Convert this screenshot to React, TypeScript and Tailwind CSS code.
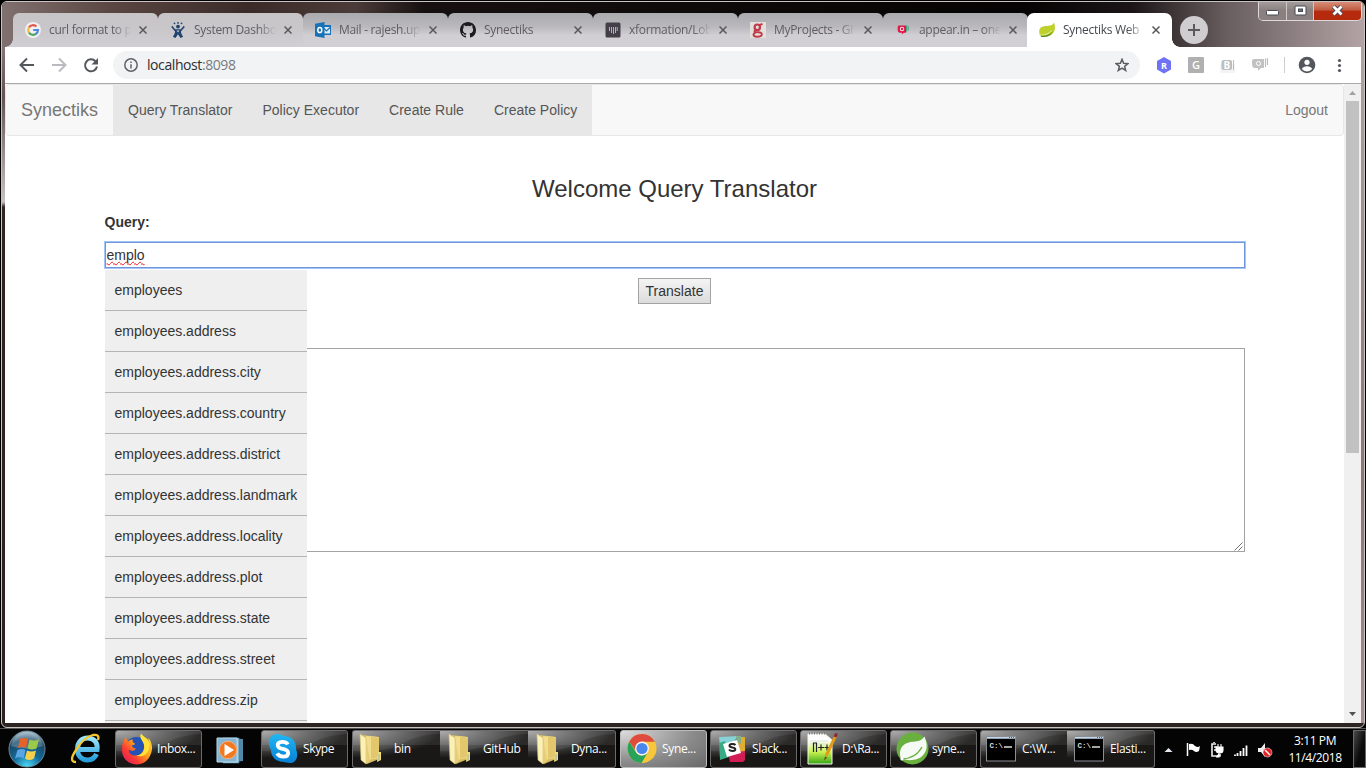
import React from "react";

type P = { className?: string };

const tabs = [
  { title: "curl format to p", icon: "google" },
  { title: "System Dashbo", icon: "jira" },
  { title: "Mail - rajesh.up", icon: "outlook" },
  { title: "Synectiks", icon: "github" },
  { title: "xformation/Lob", icon: "zube" },
  { title: "MyProjects - Gi", icon: "gerrit" },
  { title: "appear.in – one", icon: "appear" },
];

const suggestions = [
  "employees",
  "employees.address",
  "employees.address.city",
  "employees.address.country",
  "employees.address.district",
  "employees.address.landmark",
  "employees.address.locality",
  "employees.address.plot",
  "employees.address.state",
  "employees.address.street",
  "employees.address.zip",
];

function TabIcon({ name }: { name: string }) {
  return (
    <svg width="16" height="16" viewBox="0 0 16 16" className="shrink-0">
      {name === "google" && (
        <g fill="none" strokeWidth="2.2">
          <circle cx="8" cy="8" r="8" fill="#f1eff0" />
          <path d="M4 5.4A4.9 4.9 0 0 1 11.4 4.5" stroke="#e0544b" />
          <path d="M4 5.3A4.9 4.9 0 0 0 4 10.7" stroke="#f2bf42" />
          <path d="M4 10.6A4.9 4.9 0 0 0 11.2 11.7" stroke="#4aa563" />
          <path d="M8.2 8H13A4.9 4.9 0 0 1 11 11.8" stroke="#5187e0" />
        </g>
      )}
      {name === "jira" && (
        <g fill="#1f4470">
          <circle cx="8" cy="4.6" r="1.9" />
          <circle cx="4.5" cy="1.3" r=".9" />
          <circle cx="8" cy=".9" r=".9" />
          <circle cx="11.5" cy="1.3" r=".9" />
          <path d="M2.2 3.8l3 3.4h5.6l3-3.4 1 1.3-3.9 4.3c.3 2 1 3.8 2.3 5.3L10.5 16 8 12.2 5.5 16l-2.7-1.3C4.1 13.2 4.8 11.4 5.1 9.4L1.2 5.1z" />
          <path d="M6.5 8.5h3L8 10.5z" fill="#cfcdd0" />
        </g>
      )}
      {name === "outlook" && (
        <g>
          <path d="M8 3h8v10H8z" fill="#1772b8" />
          <path d="M9 5h6v6.5H9z" fill="#dfe9f2" />
          <path d="M9 6.5l2.500 2.500L15 5.500" fill="none" stroke="#1772b8" strokeWidth="1.2" />
          <path d="M0 1.800L9.500 0v16L0 14.200z" fill="#1772b8" />
          <ellipse cx="4.8" cy="8" rx="2" ry="2.6" fill="none" stroke="#fff" strokeWidth="1.5" />
        </g>
      )}
      {name === "github" && (
        <path fill="#1d1b1d" d="M8 0C3.580 0 0 3.580 0 8c0 3.540 2.290 6.530 5.470 7.590.4.070.550-.170.550-.380 0-.190-.010-.820-.010-1.490-2.010.370-2.530-.490-2.690-.940-.090-.230-.480-.940-.820-1.130-.280-.150-.680-.520-.010-.530.630-.010 1.080.580 1.230.820.720 1.210 1.870.870 2.330.660.070-.520.280-.870.510-1.070-1.780-.2-3.640-.890-3.640-3.950 0-.870.310-1.590.820-2.150-.080-.2-.360-1.020.080-2.120 0 0 .670-.210 2.200.820a7.400 7.400 0 0 1 4 0c1.530-1.040 2.200-.820 2.200-.820.440 1.100.160 1.920.080 2.120.510.560.820 1.270.820 2.150 0 3.070-1.870 3.750-3.650 3.950.290.250.540.730.540 1.480 0 1.070-.010 1.930-.010 2.200 0 .210.150.460.550.380A8 8 0 0 0 16 8c0-4.420-3.580-8-8-8z" />
      )}
      {name === "zube" && (
        <g>
          <rect x=".5" y=".5" width="15" height="15" rx="1.5" fill="#443e48" />
          <path d="M4.500 5v4M6.500 5v6M8.500 5v7M10.500 5v6M12.200 5v4" stroke="#d2ced5" strokeWidth=".8" />
        </g>
      )}
      {name === "gerrit" && (
        <g>
          <path d="M0 0h16v16H0z" fill="#e3dfdd" />
          <g fill="none" stroke="#bf3c4b" strokeWidth="2.2">
            <ellipse cx="7.3" cy="5.3" rx="2.7" ry="2.8" />
            <path d="M9 3.200l3.500-1.200M5.500 8C3 10 5.500 10 8 10.200s4.300.5 3.800 2.600c-.8 2.600-8.300 2.600-8.300 0 0-1.200 1-1.900 2.500-2.300" strokeWidth="1.9" />
          </g>
        </g>
      )}
      {name === "appear" && (
        <g>
          <path d="M11 3.500h1.300v6H11zM12.800 4h.9v4.500h-.9z" fill="#43a882" />
          <path d="M3.500 3.500h7.500v7.200H8.700L7 12.500v-1.800H4.500Q2.700 10 2.700 8V5z" fill="#de1746" />
          <circle cx="7" cy="7" r="1.7" fill="none" stroke="#f4dae0" strokeWidth="1.1" />
        </g>
      )}
      {name === "spring" && (
        <g>
          <path d="M.3 10.500C-.5 4.500 4.500 4.200 9 3.800c3-.3 5-.8 6-3.300 1.500 4 1.300 8-1 10.800-3 3.900-9 3.700-13.200 2.200z" fill="#bdd02b" />
          <path d="M1.500 13.500c5 .5 9-.6 12.200-4.600-1.700 4.900-6 6.400-11.500 6.100z" fill="#5b8a22" />
          <path d="M1 13c5 .3 9-1.300 12-4.600" fill="none" stroke="#eef4c4" strokeWidth=".8" />
        </g>
      )}
    </svg>
  );
}

function Close({ className = "" }: P) {
  return (
    <svg width="8" height="8" viewBox="0 0 8 8" className={"shrink-0 " + className}>
      <path d="M.5.5l7 7M7.500.5l-7 7" stroke="#5a585b" strokeWidth="1.5" />
    </svg>
  );
}

function TabTitle({ children, active }: { children: React.ReactNode; active?: boolean }) {
  return (
    <span
      className={
        "ml-2 w-[84px] shrink-0 whitespace-nowrap font-['Open_Sans',sans-serif] text-[12px] tracking-[-0.3px] leading-[18px] [mask-image:linear-gradient(to_right,black_76%,transparent_98%)] " +
        (active ? "text-[#45484d]" : "text-[#5f5c63]")
      }
    >
      {children}
    </span>
  );
}

function TabStrip() {
  return (
    <div className="relative flex h-[45px] items-end pl-2">
      {tabs.map((t, i) => (
        <div
          key={t.icon}
          className={
            "relative flex h-[34px] w-[145px] shrink-0 items-center rounded-t-[6px] pl-3 " +
            (i < 2
              ? "bg-linear-to-b from-[#c7c4c6] via-[#c9c7ca] to-[#d1cfd5]"
              : "bg-linear-to-b from-[#aaabae] via-[#b9b8bc] via-40% to-[#d1ced4] to-65%")
          }
        >
          {i === 0 && (
            <span className="absolute -left-2 bottom-0 size-2 bg-[radial-gradient(circle_at_0_0,transparent_7.5px,#d1cfd5_8px)]" />
          )}
          <TabIcon name={t.icon} />
          <TabTitle>{t.title}</TabTitle>
          <Close className="ml-[6px]" />
          {i < 6 && <span className="absolute -right-px bottom-[7px] h-5 w-px bg-[#8c8a90]" />}
        </div>
      ))}
      <div className="relative z-10 -ml-px flex h-[34px] w-[145px] shrink-0 items-center rounded-t-[7px] bg-white pl-3">
        <TabIcon name="spring" />
        <TabTitle active>Synectiks Web</TabTitle>
        <Close className="ml-[5px]" />
        <span className="absolute -right-2 bottom-0 size-2 bg-[radial-gradient(circle_at_100%_0,transparent_7.5px,white_8px)]" />
      </div>
      <div className="mb-[3px] ml-2 flex size-7 items-center justify-center rounded-full bg-[#cfcdd0]">
        <svg width="12" height="12" viewBox="0 0 12 12">
          <path d="M6 0v12M0 6h12" stroke="#5b595c" strokeWidth="2" />
        </svg>
      </div>
      <WindowButtons />
    </div>
  );
}

function WindowButtons() {
  return (
    <div className="absolute right-[-1px] top-[-1px] flex h-[20px] w-[104px] overflow-hidden rounded-b-[5px] border border-t-0 border-[#ded8d8]">
      <div className="flex w-[28px] items-end justify-center border-r border-[#cfc8c8] bg-linear-to-b from-[#a79f9f] to-[#8a8080] to-50% pb-[4px]">
        <svg width="13" height="6" viewBox="0 0 13 6"><rect x=".5" y=".5" width="12" height="4.5" rx="1" fill="#fff" stroke="#444955" /></svg>
      </div>
      <div className="flex w-[27px] items-center justify-center border-r border-[#cfc8c8] bg-linear-to-b from-[#a79f9f] to-[#8a8080] to-50%">
        <svg width="13" height="11" viewBox="0 0 13 11"><rect x="1" y="1" width="11" height="9" rx="1" fill="#fff" stroke="#444955" /><rect x="4.5" y="4" width="4" height="2.5" fill="#777" stroke="#444955" /></svg>
      </div>
      <div className="flex flex-1 items-center justify-center bg-linear-to-b from-[#db927f] via-[#c06045] via-45% to-[#b52a0c] to-55%">
        <svg width="13" height="11" viewBox="0 0 13 11"><path d="M2.500 1.500l8 8M10.500 1.500l-8 8" stroke="#4d4855" strokeWidth="4.6" /><path d="M2.500 1.500l8 8M10.500 1.500l-8 8" stroke="#fff" strokeWidth="2.7" /></svg>
      </div>
    </div>
  );
}

function Toolbar() {
  return (
    <div className="flex h-9 items-center bg-white">
      <svg width="105" height="36" viewBox="5 47 105 36" className="shrink-0" fill="none" strokeWidth="2">
        <path d="M34 65H21M27 58.500L20.500 65l6.500 6.500" stroke="#54585d" />
        <path d="M52 65h13M59 58.500l6.500 6.500-6.500 6.500" stroke="#b9bbbe" />
        <path d="M95.500 61.200A6 6 0 1 0 97 66.500" stroke="#54585d" />
        <path d="M98 58v6.500h-6.500z" fill="#54585d" />
      </svg>
      <div className="ml-[3px] flex h-7 w-[1027px] items-center rounded-full bg-[#f1f3f4] pl-[11px] pr-[11px]">
        <svg width="14" height="14" viewBox="0 0 14 14" fill="none" stroke="#5f6368" strokeWidth="1.5">
          <circle cx="7" cy="7" r="6.2" />
          <path d="M7 6.200v4.300M7 3.400v1.500" />
        </svg>
        <span className="ml-[9px] flex-1 font-['Open_Sans',sans-serif] text-[14px] tracking-[-0.42px] leading-5 text-[#2c2e33]">
          localhost<span className="text-[#777c82]">:8098</span>
        </span>
        <svg width="14" height="14" viewBox="0 0 14 14" fill="none" stroke="#5a5e63" strokeWidth="1.5">
          <path d="M7 1.300l1.600 4 4.300.3-3.300 2.700 1.100 4.200L7 10.200l-3.700 2.300 1.100-4.200L1.100 5.600l4.300-.3z" />
        </svg>
      </div>
      <svg width="221" height="36" viewBox="1140 47 221 36" className="shrink-0">
        <path d="M1164 57l7 4v8.500l-7 4-7-4V61z" fill="#6f72f2" />
        <text x="1161" y="68.5" fontSize="9" fontWeight="700" fill="#fff" fontFamily="Open Sans">R</text>
        <rect x="1188" y="57" width="16" height="16" rx="1" fill="#b0b0b0" />
        <text x="1192" y="69" fontSize="11" fontWeight="600" fill="#fff" fontFamily="Open Sans">G</text>
        <rect x="1220" y="64" width="15" height="9" fill="#f4f4f4" />
        <rect x="1221.5" y="60" width="10.5" height="10" rx="2" fill="#bdbdbd" />
        <path d="M1233.500 60v10" stroke="#bbb" />
        <text x="1223.5" y="69" fontSize="10" fontWeight="700" fill="#fff" fontFamily="Open Sans">B</text>
        <path d="M1254 59h10v9h-3l-3 3v-3h-4q-2-1-2-4v-3q0-2 2-2z" fill="#c2c2c2" />
        <path d="M1265.500 58.500v8.500M1267.500 58v7" stroke="#bdbdbd" strokeWidth="1.2" />
        <circle cx="1258.5" cy="63.5" r="2" fill="none" stroke="#fff" />
        <path d="M1284.500 57v16" stroke="#ccced1" />
        <circle cx="1307" cy="65" r="8.3" fill="#54585e" />
        <circle cx="1307" cy="62.3" r="2.6" fill="#fff" />
        <path d="M1301.800 69q1.500-2.700 5.200-2.700t5.200 2.700q-2 2.400-5.200 2.400t-5.200-2.400z" fill="#fff" />
        <g fill="#54585d"><circle cx="1339.5" cy="60.5" r="1.6" /><circle cx="1339.5" cy="65.5" r="1.6" /><circle cx="1339.5" cy="70.5" r="1.6" /></g>
      </svg>
    </div>
  );
}

function Page() {
  return (
    <div className="flex h-[639px] overflow-hidden bg-white font-['Liberation_Sans',Arial,sans-serif] text-[14px] leading-5 text-[#333]">
      <main className="w-[1339px] shrink-0">
        <nav className="flex h-[52px] rounded-[4px] border border-[#e7e7e7] bg-[#f8f8f8] text-[#555]">
          <div className="flex w-[107px] items-center pl-[15px] text-[18px] text-[#777]">Synectiks</div>
          <ul className="flex w-[479px] items-center gap-[30px] bg-[#e7e7e7] pl-[15px] tracking-[0.01px]">
            <li>Query Translator</li>
            <li>Policy Executor</li>
            <li>Create Rule</li>
            <li>Create Policy</li>
          </ul>
          <div className="ml-auto flex items-center pr-[15px] text-[#777]">Logout</div>
        </nav>
        <div className="mx-auto w-[1140px] pt-10">
          <h1 className="text-center text-[24px] leading-[26px]">Welcome Query Translator</h1>
          <label className="mt-[10px] block font-bold">Query:</label>
          <div className="relative mt-[10px]">
            <div className="h-[26px] border border-[#6f96d8] bg-white pl-px leading-[24px] shadow-[0_0_0_1px_#a6c5f7]">
              <span className="underline decoration-[#f01c1c] decoration-wavy decoration-1 underline-offset-[1px] [text-decoration-skip-ink:none]">emplo</span>
            </div>
            <ul className="absolute left-0 top-[28px] w-[202px]">
              {suggestions.map((s) => (
                <li key={s} className="h-[41px] border-b border-[#b5b5b5] bg-[#efefef] pl-[10px] pt-[10px]">{s}</li>
              ))}
              <li className="h-[41px] bg-[#efefef]" />
            </ul>
          </div>
          <div className="flex justify-center pt-[10px]">
            <button className="h-[26px] w-[73px] border border-[#a3a3a3] bg-linear-to-b from-[#f4f4f4] to-[#dcdcdc]">Translate</button>
          </div>
          <div className="mt-[44px] flex h-[204px] items-end justify-end border border-[#a3a3a3]">
            <svg width="9" height="9" viewBox="0 0 9 9" className="mr-px"><path d="M.5 8.500l8-8M4.500 8.500l4-4" stroke="#666" strokeWidth=".9" /></svg>
          </div>
        </div>
      </main>
      <div className="flex w-[17px] flex-col items-center bg-[#f0f0f0]">
        <svg width="17" height="17" viewBox="0 0 17 17" className="shrink-0"><path d="M5 11h7L8.500 7z" fill="#a0a0a0" /></svg>
        <div className="h-[352px] w-[13px] bg-[#c1c1c1]" />
        <svg width="17" height="17" viewBox="0 0 17 17" className="mt-auto shrink-0"><path d="M5 6h7l-3.500 4z" fill="#505050" /></svg>
      </div>
    </div>
  );
}

function Folder() {
  return (
    <svg width="24" height="32" viewBox="0 0 24 32">
      <path d="M4 2l16 2v22L8 31 4 28z" fill="#d7bb62" />
      <path d="M7 3l13 1v21l-11 2z" fill="#f2dc8d" />
      <path d="M12 4l8 .5V24l-8 2z" fill="#e2c76c" />
      <path d="M1 1l6 4v26l-5-4z" fill="#fbf0b6" stroke="#dcc477" strokeWidth=".6" />
      <path d="M7 5l4 23-4 3z" fill="#e6cd77" />
      <path d="M19 19h3v8l-4 2z" fill="#f0dd74" />
      <path d="M20 21v6" stroke="#8fb3cf" />
    </svg>
  );
}

function Cmd() {
  return (
    <svg width="30" height="26" viewBox="0 0 30 26">
      <rect x=".5" y=".5" width="29" height="24.5" fill="#000" stroke="#8b8f94" />
      <path d="M1 1h28v1.800H1z" fill="#c4d7e8" />
      <path d="M23 1.500h5" stroke="#496a8d" strokeDasharray="1 1" />
      <text x="3.5" y="11.5" fontSize="7.5" fontWeight="700" fill="#ddd" fontFamily="Liberation Mono">C:\</text>
      <path d="M18 11h8" stroke="#ddd" strokeWidth="1.3" />
    </svg>
  );
}

function Firefox() {
  return (
    <svg width="32" height="32" viewBox="0 0 32 32">
      <defs><linearGradient id="ff" x1="1" y1="0" x2="0" y2="1"><stop stopColor="#fff04a" /><stop offset=".45" stopColor="#ff9b1a" /><stop offset=".7" stopColor="#fb3a36" /><stop offset="1" stopColor="#d51467" /></linearGradient></defs>
      <circle cx="15.5" cy="15.5" r="11.5" fill="#2552b5" />
      <path d="M20 .5c0 4 4 4 3 10 1 6-2 12-8 12-5 0-8-3-7-6 2 2 5 2 7-1-2 0-4-1-4-3 1-1 3 0 3-2-2-1-3-2-2-4-3 0-4 1-5 2C6 7 5 6 5 4 2 7 1 11 1 17c0 9 7 14.500 15 14.500S30 25 31 16c.3-5-2-10-4-11l1 4C27 5 22 4 20 .5z" fill="url(#ff)" />
      <path d="M20 .5c-3 6 5 8 3 16-1 4-5 6-8 6 8 3 15-3 13-13C27 5 22 4 20 .5z" fill="#ffe23a" />
    </svg>
  );
}

function Skype() {
  return (
    <svg width="30" height="32" viewBox="0 0 30 32">
      <defs><linearGradient id="sk" x2="0" y2="1"><stop stopColor="#21b7f2" /><stop offset="1" stopColor="#087fd6" /></linearGradient></defs>
      <path d="M9 1q4 0 7 2c8 0 12.500 6 12 13 3 8 0 14-6 14-3 0-5-1-6-1C8 29 3 24 3 17-2 9 2 1 9 1z" fill="url(#sk)" />
      <path d="M19.700 11.500c-1.700-3.500-10-3.500-10 .7 0 5 10.500 2.500 10.500 7.700 0 5-9 4.500-11 .5" fill="none" stroke="#fff" strokeWidth="3.8" />
    </svg>
  );
}

function Chrome() {
  return (
    <svg width="30" height="31" viewBox="0 0 30 30">
      <circle cx="15" cy="15" r="14.5" fill="#f8c63a" />
      <path d="M2.300 8A14.500 14.500 0 0 1 27.800 8.300H15a7 7 0 0 0-6.300 9z" fill="#df4b3f" />
      <path d="M2.300 8A14.500 14.500 0 0 0 14.500 29.500l6.300-10.800a7 7 0 0 1-12-.3z" fill="#27a35c" />
      <circle cx="15" cy="15" r="6.9" fill="#f5f5f5" />
      <circle cx="15" cy="15" r="5.6" fill="#4787ee" />
    </svg>
  );
}

function Slack() {
  return (
    <svg width="26" height="26" viewBox="0 0 26 26">
      <path d="M0 1L19 0l-6 8L1 10z" fill="#86d2d6" />
      <path d="M18 1h8v17l-5 1z" fill="#e2ac2f" />
      <path d="M0 7l6-2 4 16-9 3z" fill="#3aa985" />
      <path d="M9 17l17-2v9l-2 2H11z" fill="#d31d55" />
      <path d="M17 0h5v8l-4-2z" fill="#7fb08a" />
      <path d="M4 8l14-4 4 13-14 4z" fill="#fff" />
      <path d="M16.500 9c-1.500-1.600-6-1.600-6 .8 0 2.400 5.800.9 5.800 3.400 0 2.400-5 2.200-6.300.3" fill="none" stroke="#222" strokeWidth="2" />
    </svg>
  );
}

function Notepad() {
  return (
    <svg width="31" height="33" viewBox="0 0 31 33">
      <defs><linearGradient id="np" x2="0" y2="1"><stop offset=".2" stopColor="#fff" /><stop offset=".6" stopColor="#c9f251" /><stop offset="1" stopColor="#35a516" /></linearGradient></defs>
      <path d="M1 2h17l7 6v24H1z" fill="url(#np)" stroke="#f3f6ea" />
      <path d="M2 1.500h16" stroke="#777" strokeWidth="2" strokeDasharray="1 1.5" />
      <path d="M3 9h18M3 12h18" stroke="#d4dbe2" strokeWidth=".8" />
      <path d="M6.500 20v-9h3v9M11 15.500h6M14 12.500v6M17.500 15.500h5M20 12.500v6" stroke="#222" strokeWidth="1.2" fill="none" />
      <path d="M29 3L19 24" stroke="#e49a18" strokeWidth="3" />
      <path d="M18 24.500l-1 4 3.300-3z" fill="#684519" />
      <path d="M28 5l1.500-3.500" stroke="#8c2433" strokeWidth="3" />
    </svg>
  );
}

function SpringBig() {
  return (
    <svg width="33" height="33" viewBox="0 0 33 33">
      <circle cx="16.5" cy="16.5" r="16" fill="#69b03f" />
      <path d="M5 27C1 13 11 10 19 9.500c5-.3 7.500-2 9.500-5C31 11 32 17 28 22c-5 7-15 7-23 5z" fill="#f6faf4" />
      <path d="M5 27c9 0 16-3 21-12" fill="none" stroke="#69b03f" strokeWidth="1.3" />
      <circle cx="6" cy="27" r="1.6" fill="#fff" />
    </svg>
  );
}

function TaskButton({ icon, label, pad, gap, active, first = true, last = true }: { icon: React.ReactNode; label: string; pad: string; gap: string; active?: boolean; first?: boolean; last?: boolean }) {
  return (
    <div
      className={
        "relative flex h-[38px] shrink-0 items-center overflow-hidden border-y " +
        (first ? "rounded-l-[3px] border-l " : "") +
        (last ? "rounded-r-[3px] border-r " : "") +
        (first && last ? "w-[87px] " : "w-[88px] ") +
        pad +
        (active
          ? " border-[#bcbcbc] bg-[radial-gradient(ellipse_at_0_0,#dedede,#8b8b8b_60%,#686868)]"
          : " border-[#6c6a6b] bg-[radial-gradient(ellipse_100%_75%_at_0_0,#a0a0a0,#555_55%,#191817_100%)]")
      }
    >
      {!active && (
        <svg width="88" height="36" viewBox="0 0 88 36" className="absolute left-0 top-0"><path d="M88 0H0v20Q35 22 52 11 68 3 88 3z" fill="#fff" opacity=".07" /><path d="M0 0h88v14H0z" fill="#fff" opacity=".08" /></svg>
      )}
      <span className="relative flex w-[34px] shrink-0 justify-center">{icon}</span>
      <span className={"relative whitespace-nowrap font-['Open_Sans',sans-serif] text-[12px] tracking-[-0.35px] text-white " + gap}>{label}</span>
    </div>
  );
}

function Taskbar() {
  return (
    <footer className="flex h-10 items-center border-t border-[#565455] bg-[#050404]">
      <svg width="115" height="38" viewBox="0 729 115 38" className="shrink-0">
        <defs>
          <radialGradient id="orb" cx=".5" cy="1" r="1"><stop stopColor="#4de0fb" /><stop offset=".4" stopColor="#136a9b" /><stop offset=".75" stopColor="#194866" /><stop offset="1" stopColor="#a8c2d2" /></radialGradient>
          <linearGradient id="ie" x2="0" y2="1"><stop stopColor="#9be5fc" /><stop offset="1" stopColor="#279ed9" /></linearGradient>
        </defs>
        <circle cx="27" cy="748" r="18" fill="url(#orb)" stroke="#6e8796" />
        <path d="M11 745q4-14 16-14t16 14q-16 5-32 0z" fill="#fff" opacity=".22" />
        <path d="M20 738q4-2 8 0l-2 9q-4-2-8 0z" fill="#e6622a" />
        <path d="M29.500 738.500q5 2 9.500 0l-2.500 9q-4.500 2-9 0z" fill="#9dc94a" />
        <path d="M17.500 749q4.500-2 8 0l-2 8.500q-4-2.500-8.500 0z" fill="#5aa5e3" />
        <path d="M27 749.500q4.500 2 9 0l-2 8q-5 3-9 0z" fill="#f8cf4b" />
        <path d="M78 748.500h19c1-8-4-11.500-9.500-11.500s-10 4-10 11 4 11 10 11c4.500 0 7.500-2.500 9-6" fill="none" stroke="url(#ie)" strokeWidth="5" />
        <path d="M76 761q-8 0 0-12 8-13 17-15 7-1 5 5" fill="none" stroke="#f4c72d" strokeWidth="2.3" />
      </svg>
      <TaskButton icon={<Firefox />} label="Inbox..." pad="pl-[4px]" gap="ml-[3px]" />
      <svg width="59" height="38" viewBox="202 729 59 38" className="shrink-0">
        <path d="M225 737l18 1v22l-18 2z" fill="#5289aa" />
        <path d="M223 737h16v25h-16z" fill="#9fcbe1" stroke="#45799a" strokeWidth=".7" />
        <path d="M217 737h20v24h-20z" fill="#85b5d2" stroke="#b6d9e8" />
        <circle cx="228" cy="749" r="8.7" fill="#f27920" stroke="#f6b079" />
        <path d="M224.500 743v12l9.500-6z" fill="#fff" />
      </svg>
      <TaskButton icon={<Skype />} label="Skype" pad="pl-[4px]" gap="ml-[3px]" />
      <div className="ml-1 flex">
        <TaskButton icon={<Folder />} label="bin" pad="pl-[1px]" gap="ml-[6px]" last={false} />
        <TaskButton icon={<Folder />} label="GitHub" pad="pl-[3px]" gap="ml-[6px]" first={false} last={false} />
        <TaskButton icon={<Folder />} label="Dyna..." pad="pl-[3px]" gap="ml-[6px]" first={false} />
      </div>
      <div className="ml-1 flex gap-[3px]">
        <TaskButton icon={<Chrome />} label="Syne..." pad="pl-[4px]" gap="ml-[3px]" active />
        <TaskButton icon={<Slack />} label="Slack..." pad="pl-[4px]" gap="ml-[3px]" />
        <TaskButton icon={<Notepad />} label="D:\Ra..." pad="pl-[4px]" gap="ml-[3px]" />
        <TaskButton icon={<SpringBig />} label="syne..." pad="pl-[4px]" gap="ml-[3px]" />
        <div className="flex">
          <TaskButton icon={<Cmd />} label="C:\W..." pad="pl-[3px]" gap="ml-[4px]" last={false} />
          <div className="-ml-px flex">
            <TaskButton icon={<Cmd />} label="Elasti..." pad="pl-[5px]" gap="ml-[4px]" first={false} />
          </div>
        </div>
      </div>
      <svg width="124" height="38" viewBox="1155 729 124 38" className="shrink-0">
        <path d="M1164.500 751h8l-4-4z" fill="#e5e9ef" />
        <path d="M1187.500 742v13" stroke="#fff" strokeWidth="1.5" />
        <path d="M1189 743q4-1 6 2 3 2 5 0l-1 5q-3 2-5 0-2-2-5-1z" fill="#fff" />
        <path d="M1216 743h-4v12h8v-2M1214 742v-1M1214 746h3M1214 749h3" stroke="#eee" strokeWidth="1.6" fill="none" />
        <path d="M1216 746h7v3q0 3-3 3-4 0-4-3zM1218 746v-3M1221 746v-3M1219 752v4h-3" fill="#fff" stroke="#fff" strokeWidth="1.1" />
        <path d="M1235 755v-1.500M1237.500 755v-3M1240.500 755v-5M1243.500 755v-8M1246.500 755v-10.500" stroke="#fff" strokeWidth="1.8" />
        <path d="M1258 747h3l4-5v14l-4-5h-3z" fill="#eee" />
        <circle cx="1267.5" cy="751.5" r="4.5" fill="#e12328" stroke="#fff" strokeWidth=".5" />
        <path d="M1265 749l5 5" stroke="#fff" strokeWidth="1.4" />
      </svg>
      <div className="ml-px flex w-[70px] flex-col items-center font-['Open_Sans',sans-serif] text-[12px] tracking-[-0.4px] leading-[17px] text-white">
        <span>3:11 PM</span>
        <span>11/4/2018</span>
      </div>
      <div className="ml-auto h-[38px] w-[13px] border border-[#69696a] bg-linear-to-br from-[#4b4b4b] to-[#0a0a0a] to-60%" />
    </footer>
  );
}

export default function App() {
  return (
    <div className="h-[768px] w-[1366px] overflow-hidden bg-black">
      <div className="h-[728px] border-x border-t border-black">
        <div className="flex h-[727px] flex-col overflow-hidden rounded-[6px] border border-[#c9c4c3] bg-[#2d2524]">
          <div className="bg-[linear-gradient(to_right,#80706f,#5a4642_8%,#3a2b29_18%,#4b3b39_26%,#171010_31%,#050303_75%,#1c1517_83%,#695e60_90%,#b3a3a4)] px-[3px]">
            <TabStrip />
          </div>
          <div className="flex">
            <div className="w-[3px] bg-[linear-gradient(to_bottom,#857674,#635453_50px,#c9c1c0_155px,#32241f_160px,#2d2220)]" />
            <div className="w-[1356px]">
              <Toolbar />
              <div className="h-px bg-[#a9a8aa]" />
              <Page />
            </div>
            <div className="w-[3px] bg-[linear-gradient(to_bottom,#b3a3a4,#a08a86_30%,#8d7670_65%,#a58e8a)]" />
          </div>
        </div>
      </div>
      <Taskbar />
    </div>
  );
}
